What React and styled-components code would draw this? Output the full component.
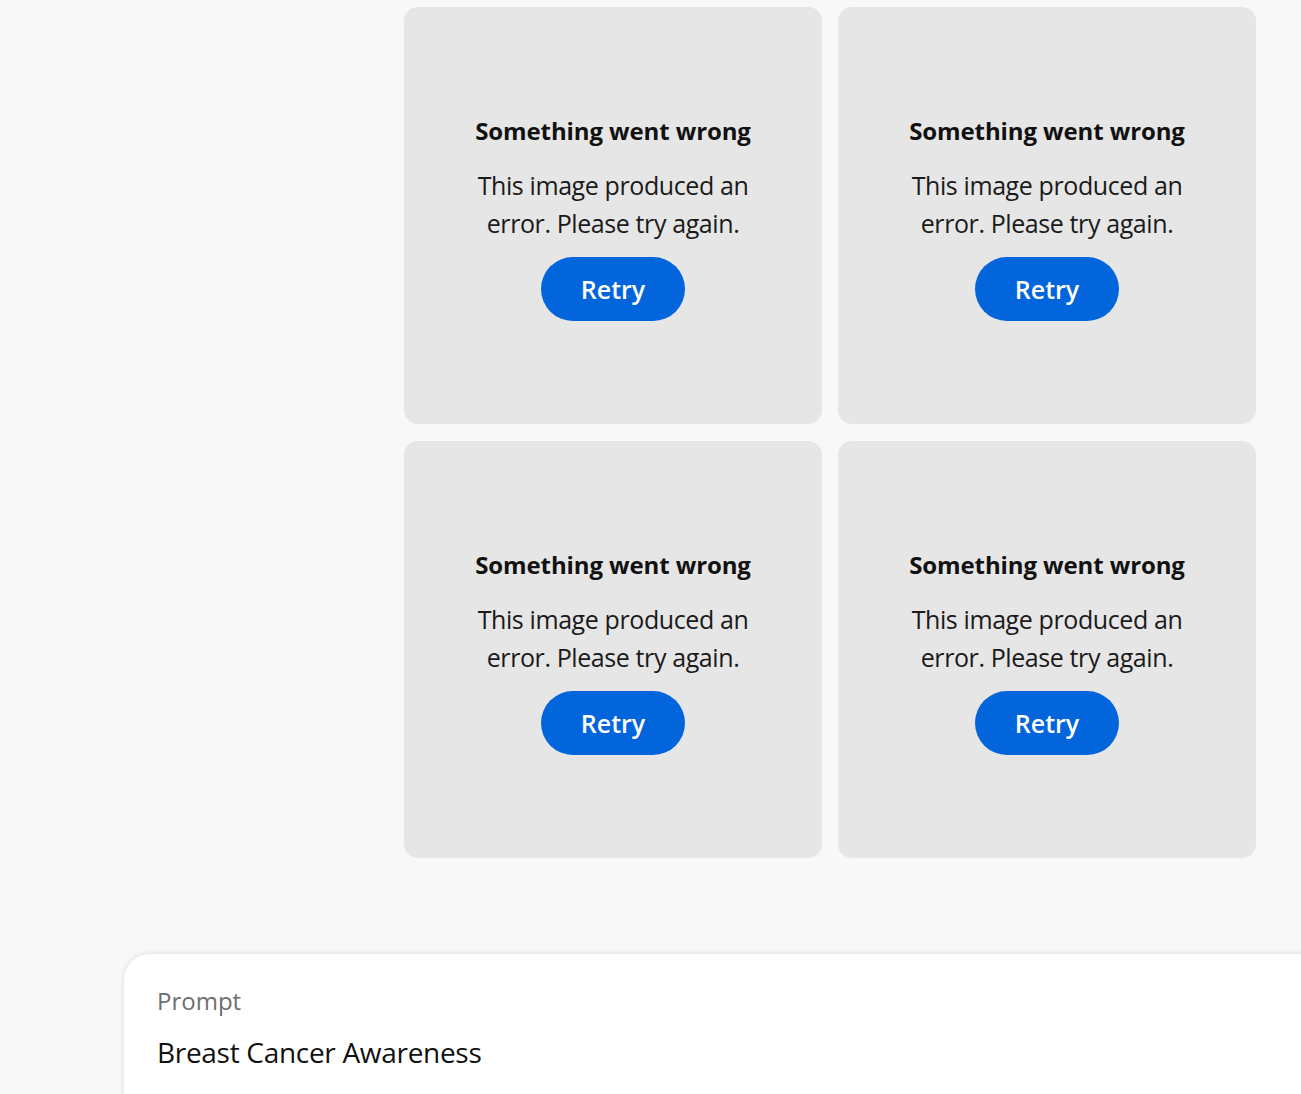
import React from 'react';
import styled, { createGlobalStyle } from 'styled-components';

const GlobalStyle = createGlobalStyle`
    html, body {
        margin: 0;
        padding: 0;
        background: #f8f8f8;
        font-family: "Open Sans", "Noto Sans", sans-serif;
    }
`;

const Page = styled.div`
    height: 1094px;
    overflow: hidden;
    display: flex;
    flex-direction: column;
    padding-top: 7px;
    box-sizing: border-box;
`;

const Grid = styled.div`
    display: grid;
    grid-template-columns: repeat(2, 418px);
    grid-auto-rows: 417px;
    gap: 17px 16px;
    margin-left: 404px;
`;

const Card = styled.div`
    background-color: #e6e6e6;
    border-radius: 14px;
    display: flex;
    flex-direction: column;
    align-items: center;
    justify-content: center;
    text-align: center;
    padding-top: 4px;
    box-sizing: border-box;
`;

const Title = styled.h3`
    margin: 0 0 19px;
    font-size: 24px;
    font-weight: 700;
    color: #111;
    letter-spacing: -0.1px;
`;

const Message = styled.p`
    margin: 0 0 15px;
    font-size: 25px;
    line-height: 38px;
    color: #1a1a1a;
    letter-spacing: -0.4px;
    width: 320px;
`;

const RetryButton = styled.button`
    width: 144px;
    height: 64px;
    border: none;
    border-radius: 32px;
    background-color: #0265dc;
    color: #fff;
    font-family: inherit;
    font-size: 25px;
    font-weight: 600;
    cursor: pointer;
`;

const PromptPanel = styled.div`
    margin-top: 96px;
    margin-left: 124px;
    margin-right: -40px;
    flex: 1;
    background: #fff;
    border-radius: 26px 26px 0 0;
    box-shadow: 0 0 6px rgba(0, 0, 0, 0.12);
    padding: 30px 33px;
`;

const PromptLabel = styled.div`
    font-size: 24px;
    color: #6e6e6e;
    margin-bottom: 16px;
`;

const PromptText = styled.div`
    font-size: 28px;
    color: #111;
    letter-spacing: -0.3px;
`;

const ErrorCard = () => (
    <Card>
        <Title>Something went wrong</Title>
        <Message>This image produced an error. Please try again.</Message>
        <RetryButton>Retry</RetryButton>
    </Card>
);

const App = () => (
    <>
        <GlobalStyle />
        <Page>
            <Grid>
                {[0, 1, 2, 3].map((i) => <ErrorCard key={i} />)}
            </Grid>
            <PromptPanel>
                <PromptLabel>Prompt</PromptLabel>
                <PromptText>Breast Cancer Awareness</PromptText>
            </PromptPanel>
        </Page>
    </>
);

export default App;
